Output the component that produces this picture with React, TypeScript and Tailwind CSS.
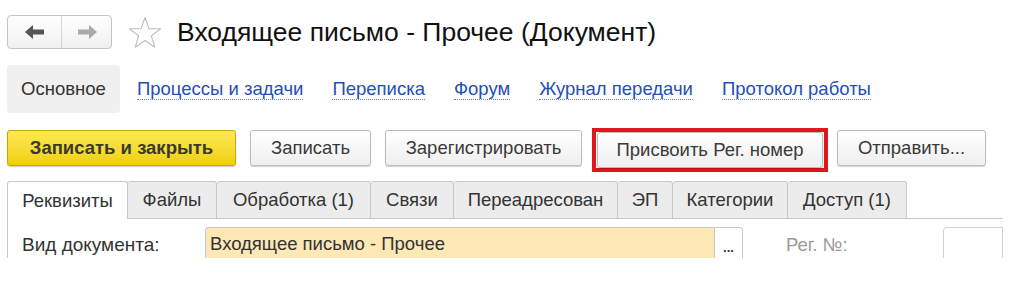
import React from 'react';

const links = ['Процессы и задачи', 'Переписка', 'Форум', 'Журнал передачи', 'Протокол работы'];

const tabs: { title: string; w: string }[] = [
  { title: 'Файлы', w: 'w-[89px]' },
  { title: 'Обработка (1)', w: 'w-[154px]' },
  { title: 'Связи', w: 'w-[83px]' },
  { title: 'Переадресован', w: 'w-[164px]' },
  { title: 'ЭП', w: 'w-[55px]' },
  { title: 'Категории', w: 'w-[115px]' },
  { title: 'Доступ (1)', w: 'w-[119px]' },
];

const btn =
  'flex h-[36px] items-center justify-center rounded-[3px] border border-[#bcbcbc] bg-gradient-to-b from-white to-[#efefef] text-[18.5px] text-[#3a3a3a] shadow-[0_1px_1px_rgba(0,0,0,0.18)]';

function Arrow({ dir, color }: { dir: 'left' | 'right'; color: string }) {
  return (
    <svg width="20" height="14" viewBox="0 0 20 14" className={dir === 'right' ? 'scale-x-[-1]' : ''}>
      <path d="M0 7 L8 0 L8 4.5 L19 4.5 L19 9.5 L8 9.5 L8 14 Z" fill={color} />
    </svg>
  );
}

export default function App() {
  return (
    <div className="h-[296px] w-[1015px] bg-white font-['Liberation_Sans',Arial,sans-serif] text-[#333]">
      {/* header */}
      <div className="flex items-center pl-[7px] pt-[15px]">
        <div className="flex h-[34px] w-[105px] rounded-[4px] border border-[#c4c4c4] bg-gradient-to-b from-white to-[#f0f0f0]">
          <div className="flex w-[54px] items-center justify-center border-r border-[#d6d6d6]">
            <Arrow dir="left" color="#555" />
          </div>
          <div className="flex flex-1 items-center justify-center">
            <Arrow dir="right" color="#a9a9a9" />
          </div>
        </div>
        <svg width="34" height="33" viewBox="0 0 34 33" className="ml-[16px]">
          <path
            d="M17 1.5 L21 12.6 L32.6 12.8 L23.4 19.9 L26.7 31.2 L17 24.5 L7.3 31.2 L10.6 19.9 L1.4 12.8 L13 12.6 Z"
            fill="none"
            stroke="#bdbdbd"
            strokeWidth="1.1"
            strokeLinejoin="round"
          />
        </svg>
        <h1 className="ml-[15px] text-[26.5px] leading-none text-[#111]">Входящее письмо - Прочее (Документ)</h1>
      </div>

      {/* sections */}
      <div className="mt-[16px] flex h-[48px] items-center pl-[7px]">
        <div className="flex h-full w-[113px] items-center justify-center rounded-[4px] bg-[#f0f0f0] text-[18.5px] text-[#333]">
          Основное
        </div>
        <div className="ml-[17px] flex gap-[29px]">
          {links.map((l) => (
            <span
              key={l}
              className="border-b border-dotted border-[#5a7fd0] text-[18.5px] leading-[21px] text-[#1f4fb8]"
            >
              {l}
            </span>
          ))}
        </div>
      </div>

      {/* command bar */}
      <div className="mt-[17px] flex h-[36px] items-start pl-[7px]">
        <div className="flex h-[36px] w-[229px] items-center justify-center rounded-[3px] border border-[#c6a800] bg-gradient-to-b from-[#fde94e] to-[#f0d000] text-[18.5px] font-bold text-[#3a3a2a] shadow-[0_1px_1px_rgba(0,0,0,0.2)]">
          Записать и закрыть
        </div>
        <div className={`${btn} ml-[14px] w-[121px]`}>Записать</div>
        <div className={`${btn} ml-[14px] w-[197px]`}>Зарегистрировать</div>
        <div className="-mt-[2px] ml-[10px] shrink-0 border-[4px] border-[#e3141c] px-[1px] py-0">
          <div className={`${btn} h-[33px] w-[226px]`}>Присвоить Рег. номер</div>
        </div>
        <div className={`${btn} ml-[9px] w-[149px]`}>Отправить...</div>
      </div>

      {/* tabs + panel */}
      <div className="mt-[15px] w-[1003px] pl-[7px]">
        <div className="flex h-[38px] items-end">
          <div className="flex h-[38px] w-[121px] items-center justify-center rounded-t-[3px] border-l border-r border-t border-[#c8c8c8] bg-white text-[18.5px]">
            Реквизиты
          </div>
          {tabs.map((t) => (
            <div
              key={t.title}
              className={`flex h-[38px] ${t.w} items-center justify-center rounded-t-[3px] border border-l-0 border-[#c8c8c8] bg-[#ececec] text-[18.5px]`}
            >
              {t.title}
            </div>
          ))}
          <div className="h-[38px] flex-1 border-b border-[#c8c8c8]" />
        </div>
        <div className="flex h-[39px] items-start overflow-hidden border-l border-[#c8c8c8] pt-[8px]">
          <span className="ml-[14px] mt-[7px] w-[183px] text-[19px] leading-[21px]">Вид документа:</span>
          <div className="flex h-[34px] w-[510px] items-center rounded-tl-[3px] border border-[#c8c8c8] bg-[#fde8b6] pl-[4px] text-[18.5px]">
            Входящее письмо - Прочее
          </div>
          <div className="flex h-[34px] w-[28px] items-end justify-center rounded-tr-[4px] border border-l-0 border-[#c8c8c8] bg-white pb-[6px] text-[13px] font-bold leading-none text-[#333]">
            ...
          </div>
          <span className="ml-[43px] mt-[7px] w-[157px] text-[18.5px] leading-[21px] text-[#9a9a9a]">Рег. №:</span>
          <div className="h-[34px] flex-1 rounded-tl-[4px] border border-[#d0d0d0] bg-white" />
        </div>
      </div>
    </div>
  );
}
